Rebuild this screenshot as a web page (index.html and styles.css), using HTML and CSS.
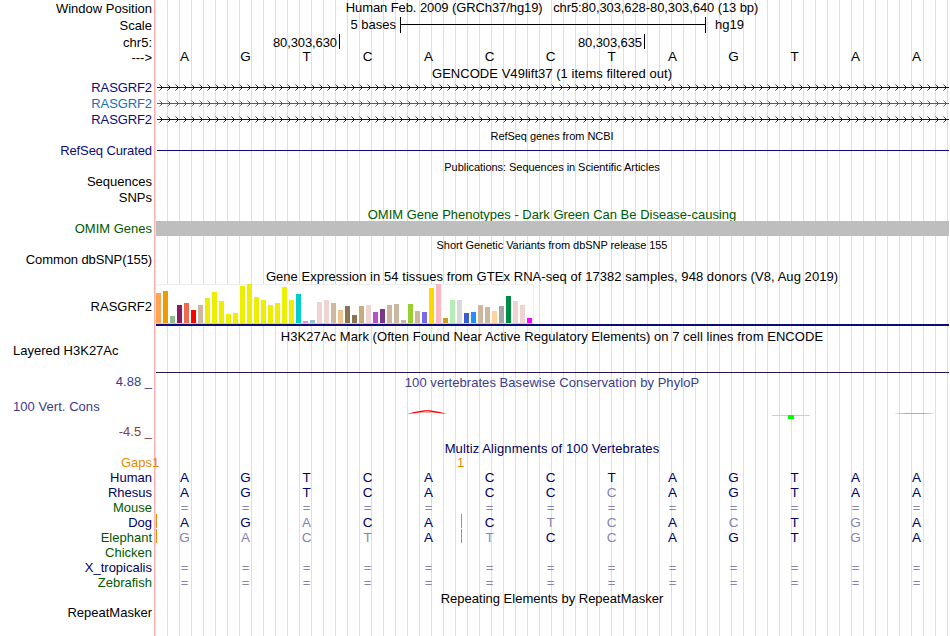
FILE: index.html
```
<!DOCTYPE html>
<html lang="en">
<head>
    <meta charset="UTF-8">
    <meta name="viewport" content="width=device-width, initial-scale=1.0">
    <title>Human chr5:80,303,628-80,303,640</title>
    <link rel="stylesheet" href="styles.css">
</head>
<body>
    <div class="browser">
        <!-- Position and ruler -->
        <div class="row row-position">
            <div class="label">Window Position</div>
            <div class="title">Human Feb. 2009 (GRCh37/hg19) &nbsp; chr5:80,303,628-80,303,640 (13 bp)</div>
        </div>
        <div class="row row-scale">
            <div class="label">Scale</div>
            <div class="scale">
                <span class="scale-size">5 bases</span>
                <span class="scale-bar"></span>
                <span class="scale-db">hg19</span>
            </div>
        </div>
        <div class="row row-chrom">
            <div class="label">chr5:</div>
            <div class="ruler">
                <span class="tick">80,303,630</span>
                <span class="tick">80,303,635</span>
            </div>
        </div>
        <div class="row row-bases">
            <div class="label">---&gt;</div>
            <div class="bases" data-seq="AGTCACCTAGTAA"></div>
        </div>

        <!-- Genes -->
        <div class="row row-gencode"><div class="title">GENCODE V49lift37 (1 items filtered out)</div></div>
        <div class="row row-gene navy">
            <div class="label">RASGRF2</div>
            <svg class="intron" width="792" height="16"><use href="#line"/><rect width="792" height="16" fill="url(#arrows)"/></svg>
        </div>
        <div class="row row-gene blue">
            <div class="label">RASGRF2</div>
            <svg class="intron" width="792" height="16"><use href="#line"/><rect width="792" height="16" fill="url(#arrows-blue)"/></svg>
        </div>
        <div class="row row-gene navy">
            <div class="label">RASGRF2</div>
            <svg class="intron" width="792" height="16"><use href="#line"/><rect width="792" height="16" fill="url(#arrows)"/></svg>
        </div>
        <div class="row row-small"><div class="title small">RefSeq genes from NCBI</div></div>
        <div class="row row-refseq navy">
            <div class="label">RefSeq Curated</div>
            <div class="refseq-line"></div>
        </div>

        <!-- Publications -->
        <div class="row row-pubs"><div class="title small">Publications: Sequences in Scientific Articles</div></div>
        <div class="row row-16"><div class="label">Sequences</div></div>
        <div class="row row-16"><div class="label">SNPs</div></div>

        <!-- OMIM -->
        <div class="row row-omim-title green"><div class="title">OMIM Gene Phenotypes - Dark Green Can Be Disease-causing</div></div>
        <div class="row row-omim green">
            <div class="label">OMIM Genes</div>
            <div class="omim-bar"></div>
        </div>

        <!-- dbSNP -->
        <div class="row row-snp-title"><div class="title small">Short Genetic Variants from dbSNP release 155</div></div>
        <div class="row row-16 row-snp"><div class="label">Common dbSNP(155)</div></div>

        <!-- GTEx -->
        <div class="row row-gtex-title"><div class="title">Gene Expression in 54 tissues from GTEx RNA-seq of 17382 samples, 948 donors (V8, Aug 2019)</div></div>
        <div class="row row-gtex">
            <div class="label">RASGRF2</div>
            <div class="gtex"><div class="gtex-bars"></div></div>
        </div>

        <!-- ENCODE -->
        <div class="row row-h3k-title"><div class="title">H3K27Ac Mark (Often Found Near Active Regulatory Elements) on 7 cell lines from ENCODE</div></div>
        <div class="row row-h3k">
            <div class="label left">Layered H3K27Ac</div>
            <div class="h3k-line"></div>
        </div>

        <!-- Conservation -->
        <div class="row row-cons">
            <div class="cons-labels">
                <div class="cons-max">4.88 _</div>
                <div class="cons-name">100 Vert. Cons</div>
                <div class="cons-min">-4.5 _</div>
            </div>
            <div class="cons-track">
                <div class="title">100 vertebrates Basewise Conservation by PhyloP</div>
                <svg class="phylop" width="795" height="12">
                    <path d="M260 4.5 H286" stroke="#ffb0b0" stroke-width="1"/>
                    <path d="M253 6 L260 4 L270 2.2 H276 L286 4 L293 6 L286 5.3 L275 3.4 H271 L260 5.3 Z" fill="#f00"/>
                    <rect x="618" y="7" width="38" height="1" fill="#8f8"/>
                    <rect x="634" y="7" width="6" height="4" fill="#0f0"/>
                    <rect x="741" y="5" width="39" height="1" fill="url(#fade)"/>
                </svg>
            </div>
        </div>
        <div class="row row-multiz dark"><div class="title">Multiz Alignments of 100 Vertebrates</div></div>
        <div class="row row-species orange">
            <div class="label">Gaps</div>
            <div class="gaps"><span>1</span><span>1</span></div>
        </div>
        <!-- lower case = differs from human, | = insert before the base -->
        <div class="row row-species dark"><div class="label">Human</div><div class="bases" data-seq="AGTCACCTAGTAA"></div></div>
        <div class="row row-species dark"><div class="label">Rhesus</div><div class="bases" data-seq="AGTCACCcAGTAA"></div></div>
        <div class="row row-species green"><div class="label">Mouse</div><div class="bases" data-seq="============="></div></div>
        <div class="row row-species dark"><div class="label">Dog</div><div class="bases" data-seq="|AGaCA|CtcAcTgA"></div></div>
        <div class="row row-species green"><div class="label">Elephant</div><div class="bases" data-seq="|gactA|tCcAGTgA"></div></div>
        <div class="row row-species green"><div class="label">Chicken</div></div>
        <div class="row row-species dark"><div class="label">X_tropicalis</div><div class="bases" data-seq="============="></div></div>
        <div class="row row-species green"><div class="label">Zebrafish</div><div class="bases" data-seq="============="></div></div>

        <!-- Repeats -->
        <div class="row row-rmsk-title"><div class="title">Repeating Elements by RepeatMasker</div></div>
        <div class="row row-16"><div class="label">RepeatMasker</div></div>
    </div>

    <svg class="defs" width="0" height="0">
        <defs>
            <rect id="line" y="7" width="792" height="1" fill="currentColor"/>
            <pattern id="arrows" width="8" height="16" patternUnits="userSpaceOnUse">
                <path d="M4 6h1v1h-1z M4 8h1v1h-1z M5 7h1v1h-1z" fill="#0c0c78"/>
                <path d="M3 5h1v1h-1z M3 9h1v1h-1z" fill="#3c3c90"/>
                <path d="M2 4h1v1h-1z M2 10h1v1h-1z" fill="#8c8cc0"/>
            </pattern>
            <pattern id="arrows-blue" width="8" height="16" patternUnits="userSpaceOnUse">
                <path d="M4 6h1v1h-1z M4 8h1v1h-1z M5 7h1v1h-1z" fill="#1a6fb4"/>
                <path d="M3 5h1v1h-1z M3 9h1v1h-1z" fill="#4c90c8"/>
                <path d="M2 4h1v1h-1z M2 10h1v1h-1z" fill="#90bcdc"/>
            </pattern>
            <linearGradient id="fade">
                <stop offset="0" stop-color="#f66" stop-opacity="0.2"/>
                <stop offset="0.3" stop-color="#f88"/>
                <stop offset="0.7" stop-color="#f88"/>
                <stop offset="1" stop-color="#f66" stop-opacity="0.2"/>
            </linearGradient>
        </defs>
    </svg>
    <script src="script.js"></script>
</body>
</html>
```
FILE: styles.css
```
* {
    margin: 0;
    padding: 0;
    box-sizing: border-box;
}

body {
    background: #fff;
    font-family: "Liberation Sans", Arial, Helvetica, sans-serif;
    font-size: 13px;
    line-height: 15px;
    color: #000;
}

.browser {
    width: 949px;
    height: 636px;
    overflow: hidden;
    background-image:
        linear-gradient(to right, #fff 154px, #ffb4b4 154px, #ffb4b4 155px, transparent 155px),
        linear-gradient(to right, #dcdcfa 1px, #fff 1px);
    background-size: 100% 100%, 12px 100%;
    background-position: 0 0, 11px 0;
}

.row {
    display: grid;
    grid-template-columns: 154px 795px;
    white-space: nowrap;
}

.label {
    grid-column: 1;
    padding-right: 2px;
    text-align: right;
}

.label.left {
    padding-left: 13px;
    text-align: left;
}

.title {
    grid-column: 2;
    padding-left: 1px;
    text-align: center;
}

.small {
    font-size: 11px;
    letter-spacing: -0.05px;
}

.navy { color: #0c0c78; }
.blue { color: #1a6fb4; }
.dark { color: #000064; }
.green { color: #005a00; }
.orange { color: #e68a00; }

/* Row heights */
.row-position { height: 17px; }
.row-scale { height: 17px; }
.row-chrom { height: 14px; }
.row-bases { height: 18px; padding-top: 1px; }
.row-gencode { height: 14px; }
.row-gene { height: 16px; }
.row-small { height: 15px; padding-top: 1px; }
.row-refseq { height: 15px; }
.row-pubs { height: 16px; padding-top: 2px; }
.row-16 { height: 16px; }
.row-omim-title { height: 15px; padding-top: 1px; }
.row-omim { height: 15px; }
.row-snp-title { height: 16px; padding-top: 2px; }
.row-gtex-title { height: 16px; padding-top: 1px; }
.row-gtex { height: 43px; }
.row-h3k-title { height: 16px; padding-top: 2px; }
.row-h3k { height: 31px; }
.row-cons { height: 67px; }
.row-multiz { height: 14px; }
.row-species { height: 15px; }
.row-rmsk-title { height: 15px; padding-top: 1px; }

.row-position .label,
.row-scale .label,
.row-chrom .label,
.row-bases .label {
    padding-top: 1px;
}

.row-position .title { letter-spacing: -0.09px; }
.row-gencode .title { letter-spacing: 0.04px; }
.row-gtex-title .title { letter-spacing: 0.055px; }
.row-h3k-title .title { letter-spacing: 0.055px; }
.row-cons .title { letter-spacing: 0.05px; }
.row-multiz .title { letter-spacing: 0.1px; }
.row-gene .label,
.row-refseq .label,
.row-snp .label { letter-spacing: -0.1px; }

/* Scale and ruler */
.scale {
    display: flex;
}

.scale-size {
    width: 246px;
    padding-right: 4px;
    text-align: right;
}

.scale-bar {
    width: 306px;
    height: 16px;
    border-left: 1px solid #000;
    border-right: 1px solid #000;
    background: linear-gradient(#000, #000) 0 7px / 100% 1px no-repeat;
}

.scale-db {
    padding-left: 9px;
}

.ruler {
    display: flex;
}

.tick {
    height: 15px;
    padding: 1px 2px 0 0;
    border-right: 1px solid #000;
    text-align: right;
    letter-spacing: -0.1px;
}

.tick:first-child { width: 186px; }
.tick:last-child { width: 305px; }

/* One 61px column for each base */
.bases {
    grid-column: 2;
    display: grid;
    grid-template-columns: repeat(13, 61px);
    font-size: 13.5px;
    text-align: center;
}

.row-species .bases {
    color: #000064;
}

.bases span {
    position: relative;
}

.bases .diff {
    color: #8484b4;
}

.bases .gap {
    padding-top: 1px;
    font-size: 13px;
    line-height: 14px;
}

.bases .insert::before {
    content: "";
    position: absolute;
    left: 2px;
    top: -1px;
    width: 1px;
    height: 14px;
    background: #e08a10;
}

.gaps {
    display: flex;
}

.gaps span {
    width: 305px;
    margin-left: -2px;
    margin-right: 2px;
}

/* Tracks */
.intron {
    display: block;
    margin-left: 3px;
}

.refseq-line {
    height: 1px;
    margin: 7px 0 0 3px;
    background: #0c0c78;
}

.omim-bar {
    position: relative;
    height: 15px;
    margin-left: 2px;
    background: #bebebe;
}

.row-gtex .label {
    padding-top: 15px;
}

.gtex {
    height: 42px;
    margin-left: 2px;
    border-bottom: 2px solid #0c0c78;
}

.gtex-bars {
    display: flex;
    align-items: flex-end;
    gap: 2px;
    width: 378px;
    height: 40px;
    background: #fff;
    border-top: 1px solid #eee;
    border-right: 1px solid #eee;
    border-bottom: 1px solid #ccc;
}

.gtex-bars i {
    flex: 0 0 5px;
}

.gtex-bars .tall {
    margin-top: -1px;
}

.h3k-line {
    height: 1px;
    margin: 29px 0 0 2px;
    background: #281450;
}

.cons-labels {
    color: #3c3c8c;
}

.cons-max,
.cons-min {
    padding-right: 2px;
    text-align: right;
}

.cons-name {
    margin: 10px 0;
    padding-left: 13px;
    letter-spacing: 0.05px;
}

.cons-min {
    color: #8c3c3c;
}

.cons-track {
    padding-top: 1px;
    color: #3c3c8c;
}

.phylop {
    display: block;
    margin-top: 18px;
}

.defs {
    position: absolute;
}
```
FILE: script.js
```
// Tissue colour and bar height in px, in GTEx order
const tissues = [
    ['#ffa54f', 30], ['#ee9a00', 32], ['#8fbc8f', 7], ['#8b1c62', 18], ['#ee6a50', 20], ['#ff0000', 13],
    ['#cdb79e', 18], ['#eeee00', 25], ['#eeee00', 31], ['#eeee00', 22], ['#eeee00', 9], ['#eeee00', 10],
    ['#eeee00', 37], ['#eeee00', 39], ['#eeee00', 26], ['#eeee00', 23], ['#eeee00', 18], ['#eeee00', 20],
    ['#eeee00', 36], ['#eeee00', 23], ['#00cdcd', 29], ['#ee82ee', 2], ['#9ac0cd', 3], ['#eed5d2', 21],
    ['#eed5d2', 23], ['#cdb79e', 20], ['#eec591', 13], ['#8b7355', 17], ['#8b7355', 8], ['#cdaa7d', 17],
    ['#eed5d2', 18], ['#b452cd', 11], ['#7a378b', 14], ['#cdb79e', 18], ['#cdb79e', 19], ['#cdb79e', 3],
    ['#9acd32', 19], ['#cdb79e', 12], ['#7a67ee', 11], ['#ffd700', 35], ['#ffb6c1', 39], ['#cd9b1d', 5],
    ['#b4eeb4', 23], ['#d9d9d9', 23], ['#3a5fcd', 10], ['#1e90ff', 11], ['#cdb79e', 18], ['#cdb79e', 16],
    ['#ffd39b', 12], ['#a6a6a6', 17], ['#008b45', 27], ['#eed5d2', 22], ['#eed5d2', 18], ['#ff00ff', 5]
];

const bars = document.querySelector('.gtex-bars');
tissues.forEach(([color, height]) => {
    const bar = document.createElement('i');
    bar.style.background = color;
    bar.style.height = height + 'px';
    if (height > 38) bar.className = 'tall';
    bars.appendChild(bar);
});

document.querySelectorAll('.bases').forEach(track => {
    let insert = false;
    for (const base of track.dataset.seq) {
        if (base === '|') {
            insert = true;
            continue;
        }
        const cell = document.createElement('span');
        cell.textContent = base.toUpperCase();
        if (base === '=') cell.classList.add('diff', 'gap');
        if (base !== base.toUpperCase()) cell.classList.add('diff');
        if (insert) cell.classList.add('insert');
        insert = false;
        track.appendChild(cell);
    }
});
```
